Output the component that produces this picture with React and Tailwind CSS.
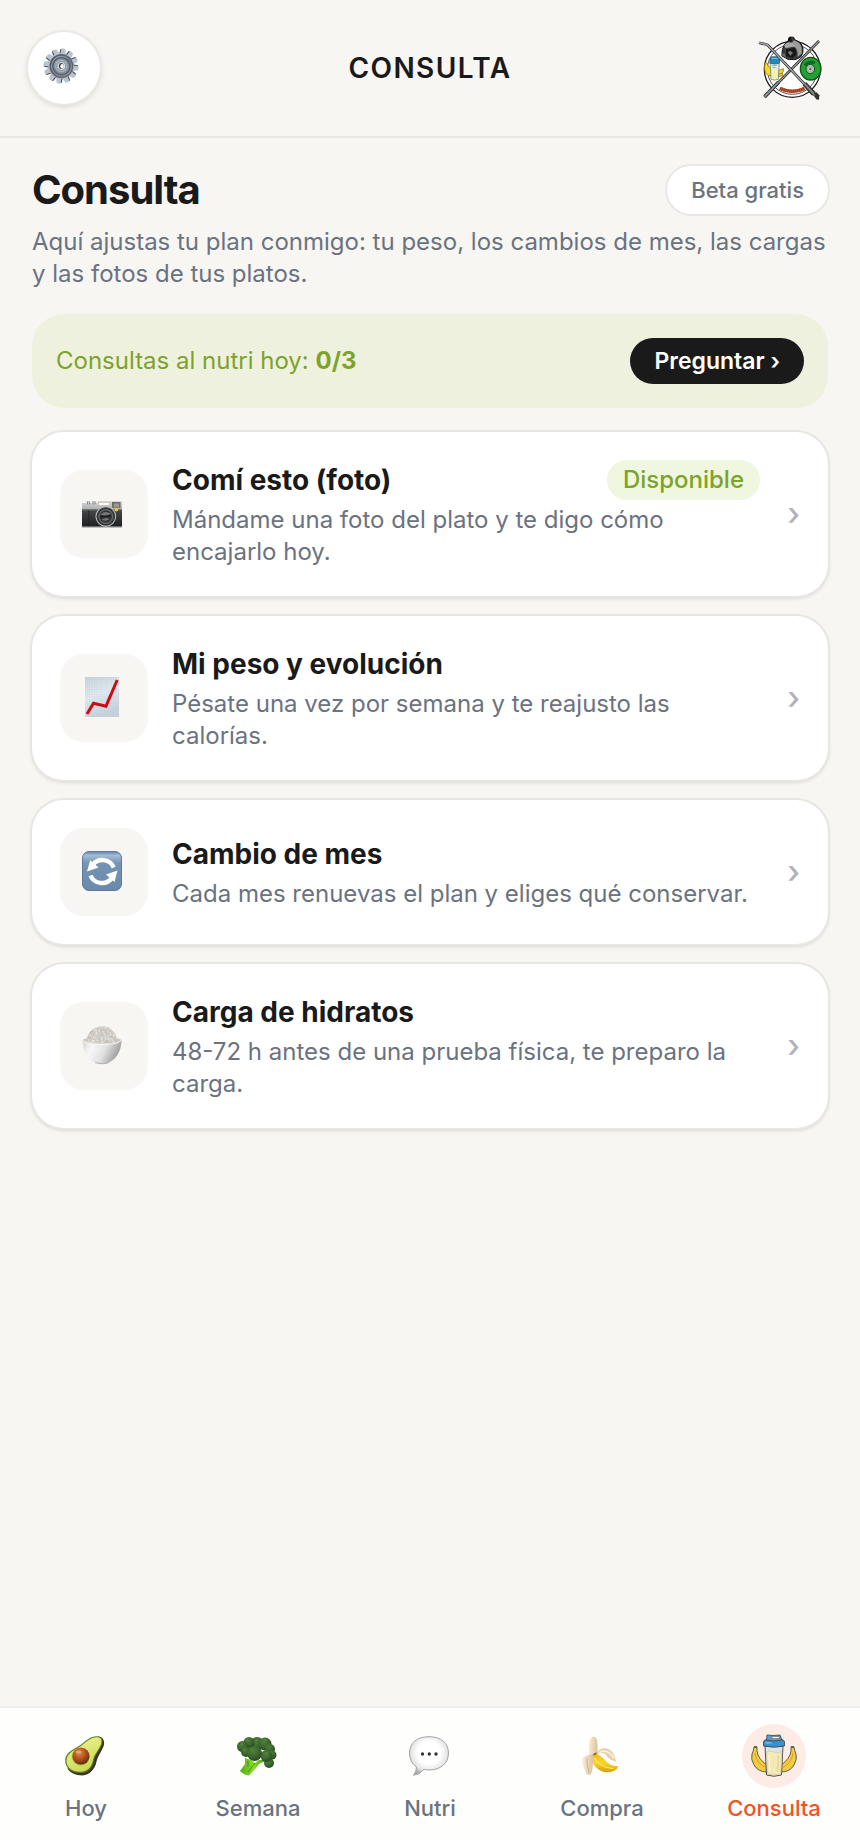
const GEAR_TEETH = Array.from({ length: 12 }, (_, i) => i * 30 + 8);

// deterministic scatter for the rice texture
const GRAINS = Array.from({ length: 300 }, (_, i) => {
  const angle = i * i * 1.7;
  const radius = Math.sqrt(i / 300);
  return { x: 20 + Math.cos(angle) * radius * 15, y: 12 + Math.sin(angle) * radius * 11, turn: (i * 67) % 180, tone: i % 4 };
});
const GRAIN_TONES = ["#efece8", "#bdb7b0", "#dedad5", "#cfcac4"];

function GearIcon() {
  return (
    <svg viewBox="0 0 40 40" className="size-10" aria-hidden="true">
      <defs>
        <linearGradient id="gear-body" x1="0" y1="0" x2="1" y2="1">
          <stop offset="0" stopColor="#a9b8c6" />
          <stop offset="0.5" stopColor="#7f8a96" />
          <stop offset="1" stopColor="#9a9ba6" />
        </linearGradient>
        <linearGradient id="gear-rim" gradientUnits="userSpaceOnUse" x1="0" y1="2" x2="0" y2="36">
          <stop offset="0" stopColor="#b8cbdc" />
          <stop offset="1" stopColor="#b8abb4" />
        </linearGradient>
      </defs>
      {GEAR_TEETH.map((deg) => (
        <g key={deg} transform={`rotate(${deg} 18 18)`}>
          <path d="M14.600 7 14.900 1.400 17 .7l1 6.300z" fill="#4c4743" />
          <path d="M15.800 7 15.900 1q2.300-1.200 4.200 0L21.500 7z" fill="#b7c4d1" />
        </g>
      ))}
      <circle cx="18" cy="18" r="12.800" fill="url(#gear-rim)" />
      <circle cx="18.400" cy="18" r="12" fill="#59636e" />
      <circle cx="18.600" cy="18.300" r="10.500" fill="url(#gear-body)" />
      <circle cx="18.500" cy="18.200" r="8.600" fill="none" stroke="#59626c" strokeWidth="1.6" />
      <circle cx="18.400" cy="18" r="6.200" fill="#a3b0bd" />
      <circle cx="18.400" cy="18" r="4.400" fill="#d3dee8" stroke="#7a848e" strokeWidth="0.8" />
      <ellipse cx="18.200" cy="18" rx="2.300" ry="3" fill="#4a3f34" />
      <ellipse cx="19" cy="18.300" rx="1.600" ry="2.400" fill="#fff" />
    </svg>
  );
}

function CameraIcon() {
  return (
    <svg viewBox="0 0 40 40" className="size-10" aria-hidden="true">
      <defs>
        <linearGradient id="cam-top" x1="0" y1="0" x2="0" y2="1">
          <stop offset="0" stopColor="#d9dadb" />
          <stop offset="1" stopColor="#a7a9ab" />
        </linearGradient>
        <linearGradient id="cam-body" x1="0" y1="0" x2="0" y2="1">
          <stop offset="0" stopColor="#48494b" />
          <stop offset="1" stopColor="#1d1e1f" />
        </linearGradient>
      </defs>
      <g transform="translate(0 1.500)">
        <path d="M0 8.500h4.500v-2h4v2h1.500v-2h4.500v2H16V6.500h24V16H0z" fill="url(#cam-top)" />
        <path d="M5.500 7v3M7.500 7v3M11 7v3M13 7v3" stroke="#77797c" strokeWidth="0.8" />
        <rect x="16.500" y="8" width="11" height="3" fill="#fffdf0" stroke="#b8b49f" strokeWidth="0.6" />
        <rect x="30" y="7.500" width="8.500" height="5.800" fill="#716d6a" />
        <rect x="32" y="9" width="5" height="3.500" fill="#a19590" />
        <rect y="15" width="40" height="17.500" fill="url(#cam-body)" />
        <path d="M0 15.500h40" stroke="#6c6d6f" />
        <path d="M0 32.300h40" stroke="#888a8c" strokeWidth="1.200" />
        <path d="M6.800 16v16" stroke="#1d1e1f" strokeWidth="0.7" />
        <circle cx="23.800" cy="22" r="10.400" fill="#b7b9bb" />
        <circle cx="23.800" cy="22" r="9.300" fill="#333537" />
        <circle cx="23.800" cy="22" r="7.400" fill="#686a6d" />
        <circle cx="23.800" cy="22" r="6.200" fill="#323436" />
        <path d="M18.500 20q5-4.500 10.500-.5l-6 2zM19.500 25q4 2.500 8-.5l-3-1z" fill="#74777a" />
        <path d="M18.500 22.200 29 21.200" stroke="#191a1b" strokeWidth="1.600" />
        <circle cx="34.300" cy="15.200" r="1.800" fill="#f7c91e" />
      </g>
    </svg>
  );
}

function ChartIcon() {
  return (
    <svg viewBox="0 0 40 40" className="size-10" aria-hidden="true">
      <defs>
        <linearGradient id="chart-paper" x1="0" y1="0" x2="0.3" y2="1">
          <stop offset="0" stopColor="#c5d3dd" />
          <stop offset="0.5" stopColor="#e3ebf1" />
          <stop offset="1" stopColor="#c6d2dc" />
        </linearGradient>
        <pattern id="chart-grid" width="2.4" height="2.4" patternUnits="userSpaceOnUse">
          <path d="M0 0h2.400M0 0v2.400" stroke="#b4c4d2" strokeWidth="0.3" />
        </pattern>
      </defs>
      <rect x="3" width="34" height="40" fill="url(#chart-paper)" />
      <rect x="3" width="34" height="40" fill="url(#chart-grid)" />
      <path d="M5 37 11.500 26.200l12.500 3L35.200 3" fill="none" stroke="#c90d12" strokeWidth="3" />
    </svg>
  );
}

function RefreshIcon() {
  return (
    <svg viewBox="0 0 40 40" className="size-10" aria-hidden="true">
      <defs>
        <linearGradient id="refresh-bg" x1="0" y1="0" x2="0" y2="1">
          <stop offset="0" stopColor="#5f84ab" />
          <stop offset="0.1" stopColor="#a4bdd6" />
          <stop offset="0.3" stopColor="#7593b4" />
          <stop offset="1" stopColor="#6b89a8" />
        </linearGradient>
      </defs>
      <rect x="0.5" y="0.5" width="39" height="39" rx="6.500" fill="url(#refresh-bg)" stroke="#5c7b9d" />
      <path d="M31.800 16.500A12.400 12.400 0 0 0 10.500 14" fill="none" stroke="#fff" strokeWidth="4.400" />
      <path d="M8.200 9.200 5 20.500 16.500 16.500z" fill="#fff" />
      <path d="M8.500 24.500A12.400 12.400 0 0 0 29.500 27.500" fill="none" stroke="#fff" strokeWidth="4.400" />
      <path d="M35.500 19.500 24 23.500l8.500 7.500z" fill="#fff" />
    </svg>
  );
}

function RiceIcon() {
  return (
    <svg viewBox="0 0 40 40" className="size-10" aria-hidden="true">
      <defs>
        <linearGradient id="rice-bowl" x1="0" y1="0" x2="1" y2="0.3">
          <stop offset="0" stopColor="#d4d4d4" />
          <stop offset="0.3" stopColor="#f8f8f8" />
          <stop offset="0.65" stopColor="#e0e0e0" />
          <stop offset="1" stopColor="#9f9f9f" />
        </linearGradient>
        <clipPath id="rice-dome">
          <path d="M4 18C5 9 10 1.500 20 1.500s15 7.500 16 16.500q-16 6-32 0z" />
        </clipPath>
      </defs>
      <ellipse cx="20" cy="15.500" rx="19.500" ry="3.500" fill="#c7c7c7" />
      <g clipPath="url(#rice-dome)">
        <rect width="40" height="24" fill="#cfcac4" />
        {GRAINS.map((grain) => (
          <ellipse
            key={grain.x}
            cx={grain.x}
            cy={grain.y}
            rx="1"
            ry="0.5"
            fill={GRAIN_TONES[grain.tone]}
            transform={`rotate(${grain.turn} ${grain.x} ${grain.y})`}
          />
        ))}
      </g>
      <path d="M.5 15q3 4.500 19.500 4.500T39.500 15C39.500 27 33 35 27 37.500q-7 2.500-14 0C6 35 .5 27 .5 15z" fill="url(#rice-bowl)" />
      <path d="M.5 15q3 4.500 19.500 4.500T39.500 15" fill="none" stroke="#fff" strokeWidth="0.8" />
      <path d="M13 37.700q7 2.300 14 0" fill="none" stroke="#a5a5a5" strokeWidth="0.8" />
    </svg>
  );
}

function AvocadoIcon() {
  return (
    <svg viewBox="0 0 40 40" className="size-10" aria-hidden="true">
      <defs>
        <radialGradient id="avo-pit" cx="0.4" cy="0.3" r="0.7">
          <stop offset="0" stopColor="#e38a4d" />
          <stop offset="0.5" stopColor="#b3561f" />
          <stop offset="1" stopColor="#6b2c0d" />
        </radialGradient>
        <linearGradient id="avo-flesh" x1="0" y1="0" x2="0.5" y2="1">
          <stop offset="0" stopColor="#f3f59b" />
          <stop offset="1" stopColor="#c8db51" />
        </linearGradient>
      </defs>
      <path d="M34 .5c5 1 6 6 4.500 10-2 5-5.500 9-7 15-1.500 8-7 13.500-14 14-7 0-13-3-15-7L24 3z" fill="#3e3529" />
      <path d="M31 .2c5-.4 7.500 3 6 8-2 6-6.500 9-8 16C27.500 32 23 37 15.500 37 6 37 .2 32 .2 25 .2 15 10 13.500 18 7c4-3.500 8-6.500 13-6.800z" fill="#60842a" />
      <path d="M31 1.300c4.500-.3 6.200 2.500 5 6.700-2 6-6.500 9-8 16C26.500 31 22.500 35.700 15.500 35.700 7 35.700 1.500 31.500 1.500 25c0-9 9-10.500 17-17 4-3.500 8-6.400 12.500-6.700z" fill="url(#avo-flesh)" />
      <circle cx="15.800" cy="20.500" r="9" fill="#a5b03c" />
      <circle cx="16" cy="20.200" r="8.400" fill="url(#avo-pit)" />
      <ellipse cx="13.500" cy="16" rx="2.800" ry="1.500" fill="#f2b98c" opacity="0.7" />
    </svg>
  );
}

function BroccoliIcon() {
  return (
    <svg viewBox="0 0 40 40" className="size-10" aria-hidden="true">
      <defs>
        <linearGradient id="broc-stem" x1="0" y1="0" x2="1" y2="0">
          <stop offset="0" stopColor="#56a818" />
          <stop offset="0.5" stopColor="#8bdb2c" />
          <stop offset="1" stopColor="#419213" />
        </linearGradient>
        <radialGradient id="broc-bud" cx="0.4" cy="0.3" r="0.7">
          <stop offset="0" stopColor="#4f7f3c" />
          <stop offset="0.6" stopColor="#3b662e" />
          <stop offset="1" stopColor="#28491f" />
        </radialGradient>
      </defs>
      <path d="M8 22l6 2 4 3 4-3 8 0-8 4-3 4-7 7.500q-5-.5-9-4.500l5-7z" fill="url(#broc-stem)" />
      <path d="M11 25l0 6M18 27l-7 9" stroke="#34800c" strokeWidth="0.8" />
      <g fill="url(#broc-bud)">
        <circle cx="20" cy="8" r="7" />
        <circle cx="12" cy="6.500" r="5.500" />
        <circle cx="28" cy="8" r="6.500" />
        <circle cx="5.500" cy="10.500" r="5.500" />
        <circle cx="33" cy="13" r="5" />
        <circle cx="35" cy="19" r="4.500" />
        <circle cx="32" cy="27" r="5" />
        <circle cx="9" cy="16" r="5" />
        <circle cx="29.500" cy="20" r="6" />
        <circle cx="17.500" cy="17.500" r="7.500" />
      </g>
      <g fill="#74a458" opacity="0.4">
        <circle cx="10" cy="4" r="1" />
        <circle cx="20" cy="4" r="1" />
        <circle cx="28" cy="4" r="1" />
        <circle cx="15" cy="14" r="1" />
        <circle cx="30" cy="17" r="1" />
        <circle cx="5" cy="8" r="1" />
      </g>
    </svg>
  );
}

function ChatIcon() {
  return (
    <svg viewBox="0 0 40 40" className="size-10" aria-hidden="true">
      <defs>
        <radialGradient id="chat-bubble" cx="0.5" cy="0.42" r="0.58">
          <stop offset="0.5" stopColor="#ffffff" />
          <stop offset="0.8" stopColor="#e6e6e6" />
          <stop offset="1" stopColor="#acacac" />
        </radialGradient>
      </defs>
      <path
        d="M20 .7C32 .7 39.500 7 39.500 17S32 34 20 34q-3 0-5-.7-4.500 5.500-10.500 6 3-4 3-8.300Q.5 26 .5 17C.5 7 8 .7 20 .7z"
        fill="url(#chat-bubble)"
        stroke="#a5a5a5"
      />
      <g fill="#333">
        <circle cx="13.500" cy="18" r="1.700" />
        <circle cx="20.300" cy="18" r="1.700" />
        <circle cx="27" cy="18" r="1.700" />
      </g>
    </svg>
  );
}

function BananaIcon() {
  return (
    <svg viewBox="0 0 40 40" className="size-10" aria-hidden="true">
      <defs>
        <linearGradient id="banana-peel" x1="0" y1="0" x2="0" y2="1">
          <stop offset="0" stopColor="#f0b90d" />
          <stop offset="0.5" stopColor="#fbd62c" />
          <stop offset="1" stopColor="#dc9d05" />
        </linearGradient>
        <linearGradient id="banana-inner" x1="0" y1="0" x2="1" y2="0">
          <stop offset="0" stopColor="#f7ead3" />
          <stop offset="1" stopColor="#dec29b" />
        </linearGradient>
      </defs>
      <path d="M8 19C8 10 8 2 12 .8c4-.8 5 4 4.500 17.500l-3 5z" fill="url(#banana-inner)" />
      <path d="M16 16c4-5 12-5 16 1 2 3 2 6 3.500 8.500-5-.5-8-3-11-7-3-2-5-2-8.500 0z" fill="#e7cfaa" />
      <path d="M18 16.500c6-3 11-1 15 6" fill="none" stroke="#faf0de" strokeWidth="1.500" />
      <path d="M13 17c5 1 9 5 13 9 4 3.500 8 4.500 11 4l-1 3c-3 3-10 4.500-16 2C13 31 10 26 11 19z" fill="url(#banana-peel)" />
      <path d="M13.500 22c3 6 10 10 19 10.500" fill="none" stroke="#fff07a" />
      <path d="M1.500 22c3-3 8-3.500 11-3-1 8 0 13-2 18-1.500 3-4 3-5.500 0-2-5-4-9-3.500-15z" fill="url(#banana-inner)" />
      <path d="M6 22q-.5 7 2 15" fill="none" stroke="#c8a678" strokeWidth="0.8" />
      <path d="M12.500 19l3-2" stroke="#816846" strokeWidth="1.600" />
    </svg>
  );
}

function ShakerIcon() {
  return (
    <svg viewBox="0 0 48 48" className="size-12" aria-hidden="true">
      <g stroke="#3c4043" strokeLinejoin="round">
        <path d="M4 15h3v4q1 8 10 14v7Q8 40 4 33 .5 27 2 22q1.500-3 2-7z" fill="#f3cb3c" strokeWidth="0.8" />
        <path d="M44 15h-3v4q-1 8-10 14v7q9 0 13-7 3.500-6 2-11-1.500-3-2-7z" fill="#f3cb3c" strokeWidth="0.8" />
        <path d="M15 14h18l-1.500 29q-7.500 2.500-15 0z" fill="#dbe3e8" strokeWidth="0.9" />
        <path d="M16.500 19.500q4-1.500 7.500.5t8-.5l-1.300 22.500q-6.500 2-13 0z" fill="#f4e9b4" stroke="#cfc391" strokeWidth="0.6" />
        <path d="M13.500 10q0-2 3-2.500h15q3 .5 3 2.500v4q-10.500 2.500-21 0z" fill="#3b91c9" strokeWidth="0.8" />
        <path d="M16.500 8 17 3l6 .5L30 3l2 5q-8 2-15.500 0z" fill="#4f9fd2" strokeWidth="0.8" />
        <path d="M22 4.500h7l.5 2h-7.500z" fill="#f3f3f0" strokeWidth="0.4" />
      </g>
      <path d="M5 21q1 10 11 15M43 21q-1 10-11 15" fill="none" stroke="#c99d28" strokeWidth="0.9" />
      <path d="M4 15h3M44 15h-3" stroke="#5f6d23" strokeWidth="2" />
      <path d="M15.500 11h6" stroke="#8cc4e4" strokeWidth="1.200" />
      <path d="M28.500 24l-1 16" stroke="#ddd19c" strokeWidth="1.200" />
      <path d="M19 23l1 16" stroke="#fcf6d4" strokeWidth="1.200" />
    </svg>
  );
}

function BrandLogo() {
  return (
    <svg viewBox="0 0 192 192" className="size-16" role="img" aria-label="Logo">
      <circle cx="103" cy="100" r="84" fill="#fff" stroke="#1e1e1e" strokeWidth="4" />
      <circle cx="103" cy="100" r="75" fill="none" stroke="#333" strokeWidth="2.500" />
      <path d="M72 60q-2-20 8-36l10-9 5-12 12 1 4 8q20 5 24 25 2 16-7 26l-16 8-22-1z" fill="#3c3c3c" stroke="#161616" strokeWidth="3" />
      <path d="M108 13q20 5 23 24v16l-12 9q3-27-20-38z" fill="#9b9b9b" />
      <path d="M78 28q9-13 24-8l12 13-9-1-22 5z" fill="#aaa" />
      <path d="M84 40l27-4 5 18-12 12-20-5z" fill="#161616" />
      <path d="M89 49l8-5 8 7-8 8z" fill="#777" />
      <path d="M70 51l12 4 2 10-14-7z" fill="#666" />
      <path d="M91 5l8 0 2 12-11-1z" fill="#131313" />
      <g stroke="#947713" strokeWidth="2.500" fill="#f8d91e">
        <path d="M21 80q-4 17 1 30 8 12 20 10V98Q29 94 26 80z" />
        <path d="M54 98q11 8 22 0v7q-4 12-22 12z" />
        <path d="M54 110q12 7 20 2v7q-11 5-20 0z" />
      </g>
      <path d="M36 76h28l-3 54q-11 4-22 0z" fill="#dbe9df" stroke="#4e6973" strokeWidth="2" />
      <path d="M40 101q9-5 20 0l-2 27q-8 3-16 0z" fill="#f5efb2" />
      <path d="M43 88h14M44 94h9" stroke="#8cb4a5" strokeWidth="3" />
      <path d="M36 66l5-4h20l5 4-2 16q-14 4-28 0z" fill="#2387b8" stroke="#24566f" strokeWidth="2" />
      <path d="M40 67h23" stroke="#71c3e1" strokeWidth="3" />
      <ellipse cx="158" cy="98" rx="31" ry="34" fill="#20a332" stroke="#15531c" strokeWidth="4" />
      <path d="M137 85q15-18 36-8l-5 8q-16-6-24 7z" fill="#126620" />
      <ellipse cx="157" cy="99" rx="13" ry="14" fill="#a9b8a9" stroke="#15561d" strokeWidth="3" />
      <circle cx="157" cy="99" r="5" fill="#59655a" stroke="#e0e5e0" strokeWidth="2" />
      <g fill="none" strokeLinejoin="round">
        <path d="M183 15 19 183" stroke="#292929" strokeWidth="8" />
        <path d="M183 15 19 183" stroke="#929292" strokeWidth="4" />
        <path d="M62 138 20 182" stroke="#333" strokeWidth="11" />
        <path d="M62 138 20 182" stroke="#999" strokeWidth="5" />
        <path d="M3 20l26 7L176 183" stroke="#292929" strokeWidth="8" />
        <path d="M3 20l26 7L176 183" stroke="#adadad" strokeWidth="4" />
        <path d="M139 143l29 31" stroke="#333" strokeWidth="15" />
        <path d="M139 143l29 31" stroke="#888" strokeWidth="6" />
      </g>
      <path d="M168 172l8-3 8 9-1 13-9-1z" fill="#333" />
      <path d="M66 157q37 18 74 0" fill="none" stroke="#c4502f" strokeWidth="11" />
      <path d="M66 157q37 18 74 0" fill="none" stroke="#7c3220" strokeWidth="9" strokeDasharray="2 4" />
    </svg>
  );
}

const services = [
  { title: "Comí esto (foto)", text: "Mándame una foto del plato y te digo cómo encajarlo hoy.", icon: CameraIcon, badge: "Disponible" },
  { title: "Mi peso y evolución", text: "Pésate una vez por semana y te reajusto las calorías.", icon: ChartIcon },
  { title: "Cambio de mes", text: "Cada mes renuevas el plan y eliges qué conservar.", icon: RefreshIcon },
  { title: "Carga de hidratos", text: "48-72 h antes de una prueba física, te preparo la carga.", icon: RiceIcon },
];

const tabs = [
  { label: "Hoy", icon: AvocadoIcon },
  { label: "Semana", icon: BroccoliIcon },
  { label: "Nutri", icon: ChatIcon },
  { label: "Compra", icon: BananaIcon },
  { label: "Consulta", icon: ShakerIcon, active: true },
];

function ServiceCard({ title, text, icon: Icon, badge }) {
  return (
    <button
      type="button"
      className="flex w-full items-center gap-6 rounded-[32px] bg-white p-7 text-left shadow-[0_0_0_2px_#e7e6e3,0_2px_4px_rgba(0,0,0,0.18)]"
    >
      <span className="flex size-22 shrink-0 items-center justify-center rounded-3xl bg-[#f7f6f3] pr-1 pb-0.5">
        <Icon />
      </span>
      <span className="min-w-0 flex-1">
        <span className="flex h-10 items-center justify-between">
          <span className="text-[28px] leading-10 font-bold text-[#1a1a1a]">{title}</span>
          {badge && (
            <span className="rounded-full bg-[#f0f7e0] px-4 text-2xl leading-10 font-medium text-[#7da329]">{badge}</span>
          )}
        </span>
        <span className="mt-1 block text-2xl leading-8 text-[#6b7280]">{text}</span>
      </span>
      <span className="w-4 shrink-0 text-right text-[32px] leading-8 font-medium text-[#b0b3bb]">›</span>
    </button>
  );
}

export default function App() {
  return (
    <div className="flex min-h-screen flex-col bg-[#f7f6f3] font-['Inter','Liberation_Sans',sans-serif] text-[#1a1a1a]">
      <header className="grid grid-cols-[1fr_auto_1fr] items-center border-b-2 border-[#e9e8e4] px-7 py-8">
        <button
          type="button"
          aria-label="Ajustes"
          className="flex size-18 items-center justify-center rounded-full bg-white pr-0.5 shadow-[0_0_0_2px_#e9e8e4,0_2px_6px_rgba(0,0,0,0.16)]"
        >
          <GearIcon />
        </button>
        <span className="text-[28px] leading-8 font-semibold tracking-wider">CONSULTA</span>
        <div className="flex justify-end pr-2.5">
          <BrandLogo />
        </div>
      </header>

      <main className="flex-1 px-8 pt-7">
        <div className="flex h-12 items-center justify-between">
          <h1 className="text-[40px] leading-12 font-bold tracking-tight">Consulta</h1>
          <span className="rounded-full bg-white px-6 py-2 text-[22px] leading-8 font-medium text-[#6b7280] ring-2 ring-[#e9e8e4]">
            Beta gratis
          </span>
        </div>
        <p className="mt-3 text-2xl leading-8 text-[#6b7280]">
          Aquí ajustas tu plan conmigo: tu peso, los cambios de mes, las cargas y las fotos de tus platos.
        </p>

        <section className="mt-6 flex items-center justify-between rounded-[32px] bg-[#eff1df] p-6">
          <p className="text-2xl leading-8 text-[#7da329]">
            Consultas al nutri hoy: <b>0/3</b>
          </p>
          <button type="button" className="rounded-full bg-[#1a1a1a] px-6 py-2 text-[23px] leading-[30px] font-semibold text-white">
            Preguntar ›
          </button>
        </section>

        <div className="mt-6 flex flex-col gap-5">
          {services.map((service) => (
            <ServiceCard key={service.title} {...service} />
          ))}
        </div>
      </main>

      <nav className="grid grid-cols-5 border-t-2 border-[#efeeeb] bg-[#fefefd] pt-4 pb-4">
        {tabs.map(({ label, icon: Icon, active }) => (
          <a
            key={label}
            href="#"
            aria-current={active ? "page" : undefined}
            className={`flex flex-col items-center gap-1 text-[22px] leading-8 font-medium ${active ? "text-[#f0531f]" : "text-[#6b7280]"}`}
          >
            <span className={`flex size-16 items-center justify-center rounded-full ${active ? "bg-[#fdece6]" : "pr-0.5"}`}>
              <Icon />
            </span>
            {label}
          </a>
        ))}
      </nav>
    </div>
  );
}
